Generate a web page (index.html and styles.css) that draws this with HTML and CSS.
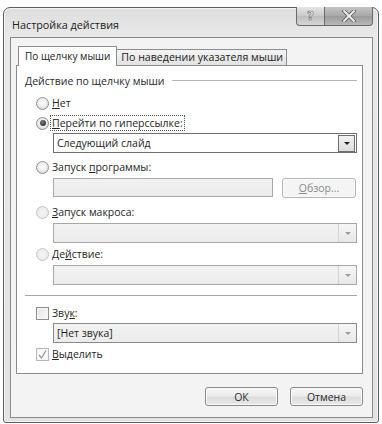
FILE: index.html
```html
<!DOCTYPE html>
<html lang="ru">
<head>
<meta charset="utf-8">
<title>Настройка действия</title>
<link rel="stylesheet" href="styles.css">
</head>
<body>
<div class="window">
  <div class="titlebar">
    <span class="title">Настройка действия</span>
    <div class="caption-btns">
      <div class="cbtn help"><span>?</span></div>
      <div class="cbtn close"><svg width="16" height="12" viewBox="0 0 16 12"><path d="M3 1 L13 11 M13 1 L3 11" stroke="#5a5a5a" stroke-width="3.4" stroke-linecap="square"/><path d="M3 1 L13 11 M13 1 L3 11" stroke="#f4f4f4" stroke-width="1.8" stroke-linecap="square"/></svg></div>
    </div>
  </div>
  <div class="client">
    <div class="tabs">
      <div class="tab active">По щелчку мыши</div>
      <div class="tab second">По наведении указателя мыши</div>
    </div>
    <div class="panel">
      <div class="legend"><span>Действие по щелчку мыши</span><div class="rule"></div></div>

      <div class="opt r1"><span class="radio"></span><span class="lbl"><u>Н</u>ет</span></div>
      <div class="opt r2"><span class="radio checked"></span><span class="lbl focus"><u>П</u>ерейти по гиперссылке:</span></div>
      <div class="select enabled s1"><span class="val">Следующий слайд</span><span class="drop"><i></i></span></div>

      <div class="opt r3"><span class="radio"></span><span class="lbl">Запуск <u>п</u>рограммы:</span></div>
      <div class="inputrow">
        <div class="input"></div>
        <div class="btn browse"><span><u>О</u>бзор...</span></div>
      </div>

      <div class="opt r4"><span class="radio off"></span><span class="lbl"><u>З</u>апуск макроса:</span></div>
      <div class="select s2"><span class="val"></span><span class="drop"><i></i></span></div>

      <div class="opt r5"><span class="radio off"></span><span class="lbl">Де<u>й</u>ствие:</span></div>
      <div class="select s2"><span class="val"></span><span class="drop"><i></i></span></div>

      <div class="sep"></div>

      <div class="opt c1"><span class="check"></span><span class="lbl">Зву<u>к</u>:</span></div>
      <div class="select s3"><span class="val">[Нет звука]</span><span class="drop"><i></i></span></div>

      <div class="opt c2"><span class="check checked"><svg width="11" height="11" viewBox="0 0 11 11"><path d="M2 6 L4.5 9 L9 1.5" fill="none" stroke="#9a9a9a" stroke-width="1.3"/></svg></span><span class="lbl"><u>В</u>ыделить</span></div>
    </div>
    <div class="footer">
      <div class="btn ok">ОК</div>
      <div class="btn cancel">Отмена</div>
    </div>
  </div>
</div>
</body>
</html>
```
FILE: styles.css
```css
* { box-sizing: border-box; }
html, body { margin: 0; padding: 0; background: #ffffff; }
body {
  width: 382px; height: 424px; overflow: hidden;
  font-family: "Open Sans", "Noto Sans", sans-serif;
  font-size: 10.5px; color: #1e1e1e;
  padding: 7px 0 0 3px;
}
u { text-decoration: underline; text-underline-offset: 1px; }

.window {
  width: 376px; height: 416px;
  border: 1px solid #5e5e5e;
  border-radius: 7px 7px 3px 3px;
  background: linear-gradient(180deg, #dedede 0px, #e9e9e9 30px, #e2e2e2 100%);
  padding: 0 5px 4px 6px;
  display: flex; flex-direction: column;
  box-shadow: inset 0 0 0 1px #f4f4f4;
}
.titlebar {
  height: 29px; display: flex; justify-content: space-between; align-items: flex-start;
}
.title { margin: 9px 0 0 2px; font-size: 10.8px; color: #202020; }
.caption-btns { display: flex; margin-top: -1px; }
.cbtn {
  height: 19px; border: 1px solid #6a6a6a; border-top: none;
  display: flex; align-items: center; justify-content: center;
}
.help {
  width: 29px; border-radius: 0 0 0 4px;
  background: linear-gradient(180deg, #e6e6e6, #c9c9c9 50%, #bdbdbd 51%, #d6d6d6);
}
.help span { font-family: "DejaVu Sans", sans-serif; font-weight: bold; font-size: 12px; color: #f2f2f2; -webkit-text-stroke: 0.6px #6c6c6c; }
.close {
  width: 48px; border-left: none; border-radius: 0 0 4px 0;
  background: linear-gradient(180deg, #c4c4c4, #a8a8a8 50%, #9a9a9a 51%, #b8b8b8);
}

.client {
  flex: 1;
  border: 1px solid #8a8a8a;
  background: #f3f3f3;
  padding: 8px 9px 0 5px;
  display: flex; flex-direction: column;
}
.tabs { display: flex; align-items: flex-end; height: 19px; padding-left: 2px; position: relative; z-index: 1; }
.tab {
  height: 16px; border: 1px solid #8c8c8c; border-bottom: none;
  padding: 0 4px 0 4px; font-size: 10px; line-height: 14px; color: #222;
  background: linear-gradient(180deg, #f4f4f4, #e2e2e2);
}
.tab.second { font-size: 10.6px; padding: 0 3px 0 4px; }
.tab.active {
  height: 20px; margin-bottom: -1px; background: #fff; padding: 2px 6px 0 6px; line-height: 15px;
}
.tab + .tab { border-left: none; }

.panel {
  height: 309px; background: #ffffff; border: 1px solid #8c8c8c;
  padding: 0 5px 0 8px;
  display: flex; flex-direction: column;
}
.legend { display: flex; align-items: center; height: 14px; margin-top: 8px; }
.legend span { white-space: nowrap; color: #2a2a2a; }
.rule { flex: 1; height: 1px; background: #b4b4b4; margin-left: 7px; border-bottom: 1px solid #fff; box-sizing: content-box; }

.opt { height: 16px; display: flex; align-items: center; padding-left: 11px; }
.r1 { margin-top: 7px; }
.r2 { margin-top: 4px; }
.r3 { margin-top: 6px; }
.r4 { margin-top: 6px; }
.r5 { margin-top: 3px; }
.c1 { margin-top: 8px; }
.c2 { margin-top: 3px; }
.lbl { margin-left: 2px; white-space: nowrap; color: #262626; padding: 0 1px; line-height: 14px; }
.lbl.focus { outline: 1px dotted #555; outline-offset: 0; }

.radio {
  width: 13px; height: 13px; border-radius: 50%;
  border: 1px solid #8e8e8e;
  background: radial-gradient(circle at 50% 40%, #ffffff 0, #eaeaea 55%, #cfcfcf 100%);
  display: inline-flex; align-items: center; justify-content: center; flex: none;
}
.radio.checked::after {
  content: ""; width: 6px; height: 6px; border-radius: 50%;
  background: radial-gradient(circle at 40% 35%, #7a7a7a, #1e1e1e);
}
.radio.off { border-color: #c4c4c4; background: radial-gradient(circle, #f6f6f6, #e6e6e6); }

.check {
  width: 13px; height: 13px; border: 1px solid #8e8e8e;
  background: linear-gradient(135deg, #e4e4e4, #fafafa);
  display: inline-flex; align-items: center; justify-content: center; flex: none;
  box-shadow: inset 0 0 0 1px #f6f6f6;
}
.check.checked { border-color: #b8b8b8; background: #fbfbfb; }

.select {
  height: 20px; margin-left: 28px; width: 304px;
  border: 1px solid #a8a8a8;
  background: linear-gradient(180deg, #f2f2f2, #ececec);
  display: flex; align-items: center; justify-content: space-between;
}
.select.enabled { border-color: #707070; background: #ffffff; }
.s1 { margin-top: 2px; }
.s2 { margin-top: 3px; }
.s3 { margin-top: 2px; border-color: #8a8a8a; }
.val { padding-left: 3px; color: #1e1e1e; white-space: nowrap; }
.drop {
  width: 18px; height: 18px; border-left: 1px solid #d4d4d4;
  display: flex; align-items: center; justify-content: center;
  background: linear-gradient(180deg, #f6f6f6, #e8e8e8);
}
.select.enabled .drop { border: 1px solid #6e6e6e; height: 17px; width: 17px; margin-right: 1px; background: linear-gradient(180deg, #f2f2f2, #dcdcdc); }
.drop i { width: 0; height: 0; border-left: 3px solid transparent; border-right: 3px solid transparent; border-top: 3px solid #9c9c9c; }
.select.enabled .drop i { border-top-color: #1e1e1e; }

.inputrow { display: flex; margin-top: 3px; margin-left: 28px; height: 20px; }
.input {
  width: 220px; height: 19px; border: 1px solid #a8a8a8;
  background: linear-gradient(180deg, #f2f2f2, #ebebeb);
}
.btn {
  height: 20px; border: 1px solid #8a8a8a; border-radius: 3px;
  background: linear-gradient(180deg, #f6f6f6 0%, #ececec 48%, #dcdcdc 52%, #e8e8e8 100%);
  display: flex; align-items: center; justify-content: center;
  box-shadow: inset 0 0 0 1px #fbfbfb;
  color: #2a2a2a;
}
.browse { width: 74px; margin-left: 9px; color: #8a8a8a; border-color: #b4b4b4; background: #f4f4f4; }

.sep { height: 1px; background: #a8a8a8; margin-top: 10px; border-bottom: 1px solid #fff; box-sizing: content-box; }

.footer { display: flex; justify-content: flex-end; gap: 12px; margin-top: 13px; }
.ok, .cancel { width: 73px; height: 19px; }
```
